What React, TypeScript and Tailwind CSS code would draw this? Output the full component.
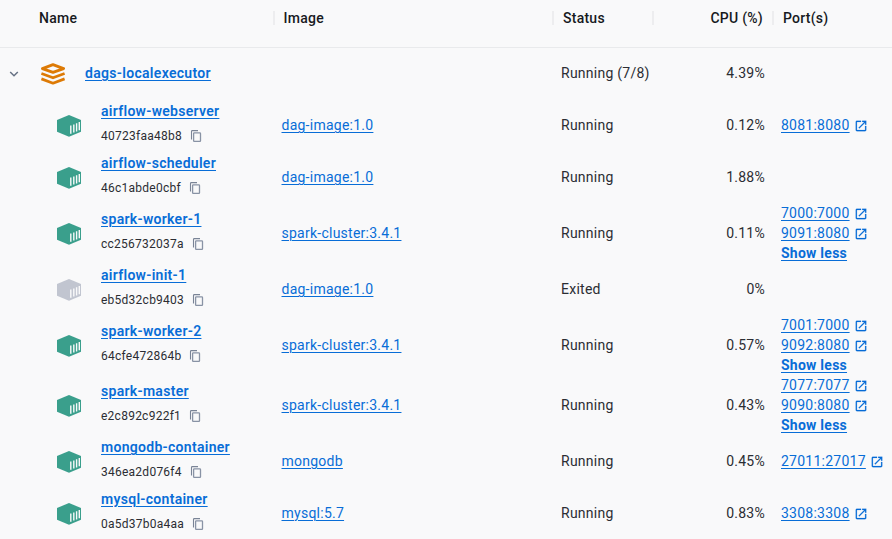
import React from "react";

type Container = {
  name: string;
  id: string;
  image: string;
  status: string;
  cpu: string;
  ports: string[];
  tall?: boolean;
};

const containers: Container[] = [
  { name: "airflow-webserver", id: "40723faa48b8", image: "dag-image:1.0", status: "Running", cpu: "0.12%", ports: ["8081:8080"] },
  { name: "airflow-scheduler", id: "46c1abde0cbf", image: "dag-image:1.0", status: "Running", cpu: "1.88%", ports: [] },
  { name: "spark-worker-1", id: "cc256732037a", image: "spark-cluster:3.4.1", status: "Running", cpu: "0.11%", ports: ["7000:7000", "9091:8080"], tall: true },
  { name: "airflow-init-1", id: "eb5d32cb9403", image: "dag-image:1.0", status: "Exited", cpu: "0%", ports: [] },
  { name: "spark-worker-2", id: "64cfe472864b", image: "spark-cluster:3.4.1", status: "Running", cpu: "0.57%", ports: ["7001:7000", "9092:8080"], tall: true },
  { name: "spark-master", id: "e2c892c922f1", image: "spark-cluster:3.4.1", status: "Running", cpu: "0.43%", ports: ["7077:7077", "9090:8080"], tall: true },
  { name: "mongodb-container", id: "346ea2d076f4", image: "mongodb", status: "Running", cpu: "0.45%", ports: ["27011:27017"] },
  { name: "mysql-container", id: "0a5d37b0a4aa", image: "mysql:5.7", status: "Running", cpu: "0.83%", ports: ["3308:3308"] },
];

const grid = "grid grid-cols-[281px_280px_120px_84px_127px] items-center";
const link = "text-[#086dd7] underline underline-offset-2 decoration-1";

function StackIcon() {
  return (
    <svg width="24" height="22" viewBox="0 0 24 22" fill="none" stroke="#dd7a05" strokeWidth="2.8" strokeLinejoin="round">
      <path d="M1.4 5.6 12 1.6 22.6 5.6 12 9.4Z" />
      <path d="M0.4 10.5 12 14.8 23.6 10.5" />
      <path d="M0.4 15.9 12 20.2 23.6 15.9" />
    </svg>
  );
}

function ContainerIcon({ running }: { running: boolean }) {
  return (
    <svg width="24" height="22" viewBox="0 0 24 22" fill={running ? "#3a9f8c" : "#c1c5d0"}>
      <path d="M12 0 24 4.9V16.8L12 21.8 0 16.8V4.9Z" />
      <path d="M13.8 10.6V18.8M16.8 9.4V17.6M19.6 8.2V16.4M22.3 7V15.2" stroke="#f9f9fa" strokeWidth="1.4" />
    </svg>
  );
}

function CopyIcon() {
  return (
    <svg width="12" height="12" viewBox="0 0 12 12" fill="none" stroke="#8993a5">
      <path d="M1.5 9.5V1.5Q1.5 0.6 2.3 0.6H8" stroke="#7a8496" strokeWidth="1.1" />
      <rect x="3.6" y="2.8" width="6.9" height="8.6" rx="0.7" strokeWidth="1.3" />
    </svg>
  );
}

function LaunchIcon() {
  return (
    <svg className="mt-px" width="14" height="14" viewBox="0 0 24 24" fill="#086dd7" stroke="#086dd7" strokeWidth="0.3">
      <path d="M19 19H5V5h7V3H5c-1.11 0-2 .9-2 2v14c0 1.1.89 2 2 2h14c1.1 0 2-.9 2-2v-7h-2v7zM14 3v2h3.59l-9.83 9.83 1.41 1.41L19 6.41V10h2V3h-7z" />
    </svg>
  );
}

function Header() {
  return (
    <div className={`${grid} h-12 border-b border-[#e9eaec] pb-[11px] font-medium text-[#17191e]`}>
      <div className="flex items-center justify-between">
        <span className="pl-[39px]">Name</span>
        <span className="mr-1.5 h-3.5 w-0.5 bg-[#ededef]" />
      </div>
      <div className="flex items-center justify-between pl-[2.5px]">
        <span>Image</span>
        <span className="mr-[7px] h-3.5 w-0.5 bg-[#ededef]" />
      </div>
      <div className="flex items-center justify-between pl-0.5">
        <span>Status</span>
        <span className="mr-[27px] h-3.5 w-0.5 bg-[#ededef]" />
      </div>
      <div className="pr-0.5 text-right">CPU (%)</div>
      <div className="flex items-center pl-[7px]">
        <span className="h-3.5 w-0.5 bg-[#ededef]" />
        <span className="pl-[9px]">Port(s)</span>
      </div>
    </div>
  );
}

function Row({ item }: { item: Container }) {
  return (
    <div className={`${grid} ${item.tall ? "h-[60px]" : "h-[52px]"}`}>
      <div className="flex items-center pl-[57px]">
        <span className="pt-0.5">
          <ContainerIcon running={item.status === "Running"} />
        </span>
        <div className="pb-[3px] pl-5">
          <div className={`${link} leading-6 font-semibold tracking-[0.29px]`}>{item.name}</div>
          <div className="mt-px flex h-6 items-center text-xs">
            <span>{item.id}</span>
            <span className="pl-2">
              <CopyIcon />
            </span>
          </div>
        </div>
      </div>
      <div className="pl-[0.5px]">
        <span className={link}>{item.image}</span>
      </div>
      <div>{item.status}</div>
      <div className="text-right">{item.cpu}</div>
      <div className="pl-4">
        {item.ports.map((port) => (
          <div key={port} className="flex h-5 items-center gap-1">
            <span className={link}>{port}</span>
            <LaunchIcon />
          </div>
        ))}
        {item.tall && <div className={`${link} font-bold`}>Show less</div>}
      </div>
    </div>
  );
}

export default function App() {
  return (
    <div className="h-[539px] w-[892px] overflow-hidden bg-[#f9f9fa] font-['Roboto',sans-serif] text-sm leading-5 tracking-[0.25px] text-[#2b2d33] [&_svg]:block">
      <Header />
      <div className={`${grid} -mt-px h-[52px]`}>
        <div className="flex items-center">
          <svg className="mt-0.5 ml-[9px]" width="10" height="6" viewBox="0 0 10 6" fill="none" stroke="#677285" strokeWidth="1.5">
            <path d="M1.2 1 5 4.8 8.8 1" />
          </svg>
          <span className="pt-0.5 pl-[22px]">
            <StackIcon />
          </span>
          <span className={`${link} ml-5 font-semibold tracking-[0.31px]`}>dags-localexecutor</span>
        </div>
        <div />
        <div>Running (7/8)</div>
        <div className="text-right">4.39%</div>
        <div />
      </div>
      {containers.map((item) => (
        <Row key={item.name} item={item} />
      ))}
    </div>
  );
}
